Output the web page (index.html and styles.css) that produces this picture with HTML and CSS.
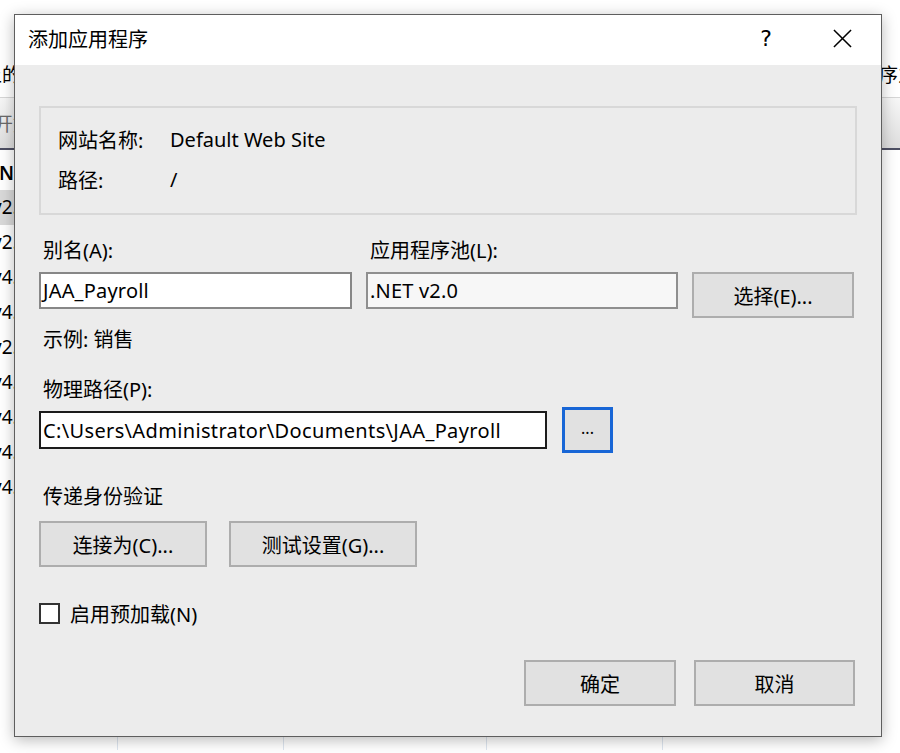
FILE: index.html
```html
<!DOCTYPE html>
<html lang="zh-CN">
<head>
<meta charset="utf-8">
<title>添加应用程序</title>
<link rel="stylesheet" href="styles.css">
</head>
<body>
<div class="app">
  <div class="app-top"></div>
  <div class="app-title">
    <div class="t-left"><span class="shift-l">上的</span></div>
    <div class="t-right">程序之</div>
  </div>
  <div class="app-header"><span class="h-left">开始</span></div>
  <div class="list">
    <div class="list-row head"><div class="cell c1"><span class="nhead">N</span></div><div class="cell c2"></div><div class="cell c3"></div><div class="cell c4"></div><div class="cell c5"></div></div>
    <div class="list-row"><div class="cell c1 sel"><span class="ver">v2.0</span></div><div class="cell c2"></div><div class="cell c3"></div><div class="cell c4"></div><div class="cell c5"></div></div>
    <div class="list-row"><div class="cell c1"><span class="ver">v2.0</span></div><div class="cell c2"></div><div class="cell c3"></div><div class="cell c4"></div><div class="cell c5"></div></div>
    <div class="list-row"><div class="cell c1"><span class="ver">v4.0</span></div><div class="cell c2"></div><div class="cell c3"></div><div class="cell c4"></div><div class="cell c5"></div></div>
    <div class="list-row"><div class="cell c1"><span class="ver">v4.0</span></div><div class="cell c2"></div><div class="cell c3"></div><div class="cell c4"></div><div class="cell c5"></div></div>
    <div class="list-row"><div class="cell c1"><span class="ver">v2.0</span></div><div class="cell c2"></div><div class="cell c3"></div><div class="cell c4"></div><div class="cell c5"></div></div>
    <div class="list-row"><div class="cell c1"><span class="ver">v4.0</span></div><div class="cell c2"></div><div class="cell c3"></div><div class="cell c4"></div><div class="cell c5"></div></div>
    <div class="list-row"><div class="cell c1"><span class="ver">v4.0</span></div><div class="cell c2"></div><div class="cell c3"></div><div class="cell c4"></div><div class="cell c5"></div></div>
    <div class="list-row"><div class="cell c1"><span class="ver">v4.0</span></div><div class="cell c2"></div><div class="cell c3"></div><div class="cell c4"></div><div class="cell c5"></div></div>
    <div class="list-row"><div class="cell c1"><span class="ver">v4.0</span></div><div class="cell c2"></div><div class="cell c3"></div><div class="cell c4"></div><div class="cell c5"></div></div>
    <div class="list-row"><div class="cell c1"></div><div class="cell c2"></div><div class="cell c3"></div><div class="cell c4"></div><div class="cell c5"></div></div>
    <div class="list-row"><div class="cell c1"></div><div class="cell c2"></div><div class="cell c3"></div><div class="cell c4"></div><div class="cell c5"></div></div>
    <div class="list-row"><div class="cell c1"></div><div class="cell c2"></div><div class="cell c3"></div><div class="cell c4"></div><div class="cell c5"></div></div>
    <div class="list-row"><div class="cell c1"></div><div class="cell c2"></div><div class="cell c3"></div><div class="cell c4"></div><div class="cell c5"></div></div>
    <div class="list-row"><div class="cell c1"></div><div class="cell c2"></div><div class="cell c3"></div><div class="cell c4"></div><div class="cell c5"></div></div>
    <div class="list-row"><div class="cell c1"></div><div class="cell c2"></div><div class="cell c3"></div><div class="cell c4"></div><div class="cell c5"></div></div>
    <div class="list-row"><div class="cell c1"></div><div class="cell c2"></div><div class="cell c3"></div><div class="cell c4"></div><div class="cell c5"></div></div>
  </div>
</div>

<div class="dialog">
  <div class="titlebar">
    <div class="title">添加应用程序</div>
    <div class="tb-btn help">?</div>
    <div class="tb-btn close">
      <svg width="20" height="20" viewBox="0 0 20 20"><path d="M1 1 L19 19 M19 1 L1 19" stroke="#000" stroke-width="1.6" fill="none"/></svg>
    </div>
  </div>
  <div class="client">
    <div class="infobox">
      <div class="info-row"><span class="info-label">网站名称:</span><span class="info-val">Default Web Site</span></div>
      <div class="info-row"><span class="info-label">路径:</span><span class="info-val">/</span></div>
    </div>

    <div class="pair">
      <div class="col-alias">
        <div class="label">别名(A):</div>
        <div class="input alias">JAA_Payroll</div>
      </div>
      <div class="col-pool">
        <div class="label">应用程序池(L):</div>
        <div class="pool-line">
          <div class="input pool">.NET v2.0</div>
          <div class="btn select">选择(E)...</div>
        </div>
      </div>
    </div>

    <div class="label sample">示例: 销售</div>

    <div class="label path-label">物理路径(P):</div>
    <div class="path-line">
      <div class="input path">C:\Users\Administrator\Documents\JAA_Payroll</div>
      <div class="btn browse">...</div>
    </div>

    <div class="label auth-label">传递身份验证</div>
    <div class="auth-line">
      <div class="btn connect">连接为(C)...</div>
      <div class="btn test">测试设置(G)...</div>
    </div>

    <div class="check-line">
      <span class="checkbox"></span>
      <span class="check-text">启用预加载(N)</span>
    </div>

    <div class="footer">
      <div class="btn ok">确定</div>
      <div class="btn cancel">取消</div>
    </div>
  </div>
</div>
</body>
</html>
```

FILE: styles.css
```css
* { box-sizing: border-box; }
html, body {
  margin: 0;
  padding: 0;
  width: 900px;
  height: 753px;
  overflow: hidden;
  background: #ffffff;
  font-family: "Noto Sans", "Noto Sans CJK SC", sans-serif;
  color: #000;
}

/* ---------- background window ---------- */
.app {
  width: 900px;
  height: 753px;
  overflow: hidden;
}
.app-top { height: 50px; }
.app-title {
  height: 47px;
  display: grid;
  grid-template-columns: 860px 1fr;
  align-items: center;
  font-size: 19px;
  white-space: nowrap;
  overflow: hidden;
}
.t-left { overflow: visible; }
.shift-l { display: inline-block; margin-left: -17px; }
.t-right { white-space: nowrap; }
.app-header {
  height: 53px;
  border-top: 1px solid #d6d6d6;
  border-bottom: 2px solid #4d4f63;
  background: linear-gradient(#f7f7f7, #dedede);
  display: flex;
  align-items: center;
  font-size: 19px;
  color: #6a6a6a;
  white-space: nowrap;
}
.h-left { margin-left: -6px; }
.list { display: flex; flex-direction: column; }
.list-row {
  height: 35px;
  display: flex;
  font-size: 19px;
  line-height: 35px;
  white-space: nowrap;
}
.list-row.head { height: 40px; padding-top: 6px; line-height: 34px; }
.cell { border-right: 1px solid #dde5ef; height: 100%; }
.c1 { width: 118px; }
.c2 { width: 166px; }
.c3 { width: 203px; }
.c4 { width: 176px; }
.c5 { flex: 1; border-right: none; }
.sel { background: #d9d9d9; }
.ver { display: inline-block; margin-left: -8px; }
.nhead { display: inline-block; margin-left: -1px; font-weight: 600; }

/* ---------- dialog ---------- */
.dialog {
  position: absolute;
  left: 14px;
  top: 14px;
  width: 868px;
  height: 723px;
  border: 1px solid #5e5e5e;
  background: #ececec;
  box-shadow: 0 3px 14px rgba(0, 0, 0, 0.28);
  display: flex;
  flex-direction: column;
  font-size: 20px;
}
.titlebar {
  height: 50px;
  background: #ffffff;
  display: flex;
  align-items: center;
  flex-shrink: 0;
}
.title {
  flex: 1;
  padding-left: 13px;
  font-size: 20px;
  line-height: 50px;
}
.tb-btn {
  height: 50px;
  display: flex;
  align-items: center;
  justify-content: center;
}
.help {
  width: 74px;
  font-family: "DejaVu Sans", "Noto Sans", sans-serif;
  font-size: 22px;
  padding-bottom: 3px;
}
.close { width: 78px; padding-bottom: 3px; }
.close svg { width: 19px; height: 19px; }

.client {
  flex: 1;
  padding: 41px 24px 0 24px;
  display: flex;
  flex-direction: column;
}
.infobox {
  height: 109px;
  border: 2px solid #d8d8d8;
  padding: 11px 0 0 17px;
  display: flex;
  flex-direction: column;
}
.info-row {
  height: 40px;
  display: flex;
  align-items: center;
}
.info-label { width: 112px; }

.label {
  height: 28px;
  line-height: 28px;
  padding-left: 4px;
  white-space: nowrap;
}
.pair {
  margin-top: 22px;
  display: flex;
}
.col-alias { width: 313px; display: flex; flex-direction: column; }
.col-pool { margin-left: 14px; display: flex; flex-direction: column; }
.col-alias .label, .col-pool .label { margin-bottom: 7px; }
.pool-line { display: flex; align-items: flex-start; height: 37px; overflow: visible; }

.input {
  height: 37px;
  border: 2px solid #878787;
  background: #ffffff;
  padding-left: 2px;
  display: flex;
  align-items: center;
  white-space: nowrap;
  overflow: hidden;
  letter-spacing: 0.2px;
}
.alias { width: 313px; }
.pool { width: 312px; background: #f7f7f7; border-color: #8f8f8f; }

.btn {
  height: 46px;
  background: #e1e1e1;
  border: 2px solid #adadad;
  display: flex;
  align-items: center;
  justify-content: center;
  white-space: nowrap;
  flex-shrink: 0;
}
.select { width: 162px; margin-left: 14px; }

.sample { margin-top: 17px; }
.path-label { margin-top: 22px; }
.path-line {
  margin-top: 3px;
  display: flex;
  align-items: center;
}
.path { width: 508px; height: 38px; border-color: #1c1c1c; letter-spacing: 0.35px; }
.browse {
  width: 51px;
  margin-left: 15px;
  border: 3px solid #1866d6;
  font-size: 16px;
  padding-bottom: 4px;
}

.auth-label { margin-top: 30px; }
.auth-line { margin-top: 10px; display: flex; }
.connect { width: 168px; }
.test { width: 188px; margin-left: 22px; }

.check-line {
  margin-top: 32px;
  height: 28px;
  display: flex;
  align-items: center;
}
.checkbox {
  width: 21px;
  height: 21px;
  border: 2px solid #333333;
  background: #ffffff;
}
.check-text { margin-left: 10px; }

.footer {
  margin-top: 33px;
  display: flex;
  justify-content: flex-end;
  padding-right: 2px;
}
.ok { width: 152px; }
.cancel { width: 161px; margin-left: 18px; }
```
